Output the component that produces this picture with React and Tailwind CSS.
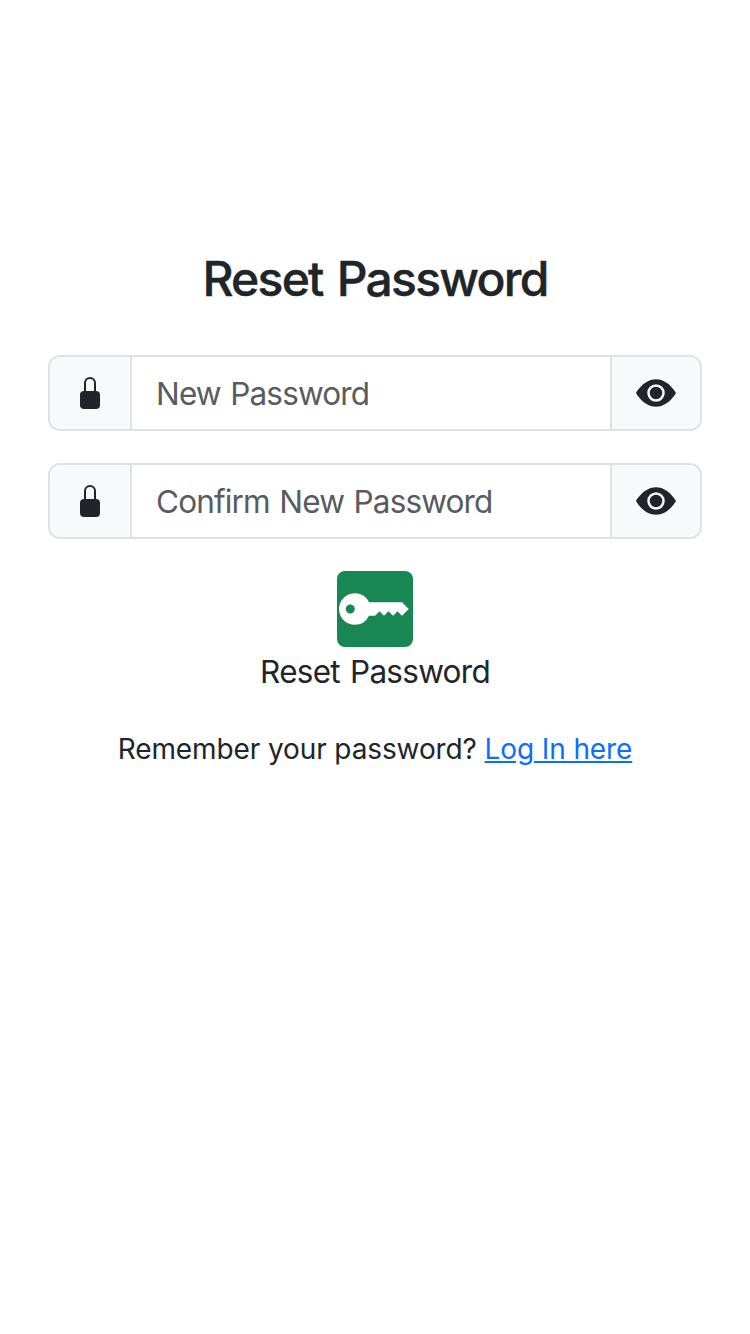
import { BsKeyFill, BsLockFill, BsEyeFill } from "react-icons/bs";

function PasswordField({ placeholder }) {
  return (
    <div className="flex h-[76px] w-full overflow-hidden rounded-xl border-2 border-[#dee2e6] text-[31.5px]">
      <span className="flex w-[82px] shrink-0 items-center justify-center border-r-2 border-[#dee2e6] bg-[#f8f9fa]">
        <BsLockFill className="size-8" />
      </span>
      <input
        type="password"
        placeholder={placeholder}
        className="min-w-0 flex-1 bg-white px-6 pt-0.5 tracking-[-0.85px] [word-spacing:1.5px] outline-none placeholder:text-[#585c60]"
      />
      <button type="button" className="flex w-[90px] shrink-0 items-center justify-center border-l-2 border-[#dee2e6] bg-[#f8f9fa]">
        <BsEyeFill className="size-10" />
      </button>
    </div>
  );
}

export default function App() {
  return (
    <main className="flex min-h-screen flex-col items-center bg-white px-12 pt-[250px] font-['Inter',sans-serif] text-[#212529]">
      <h1 className="text-[48px] leading-[58px] font-medium tracking-[-1.75px] [word-spacing:3px] whitespace-nowrap [-webkit-text-stroke:0.4px_currentColor]">Reset Password</h1>
      <form className="mt-[47px] flex w-full flex-col items-center gap-8">
        <PasswordField placeholder="New Password" />
        <PasswordField placeholder="Confirm New Password" />
        <div className="flex flex-col items-center">
          <button type="button" aria-label="Reset Password" className="flex size-[76px] items-center justify-center rounded-lg bg-[#198754] text-white">
            <BsKeyFill className="size-[72px]" />
          </button>
          <span className="pt-px text-[31.5px] leading-[48px] tracking-[-0.73px] [word-spacing:2px] whitespace-nowrap">Reset Password</span>
        </div>
      </form>
      <p className="mt-8 text-[28px] leading-[42px] tracking-[-0.11px] whitespace-nowrap">
        Remember your password? <a href="#login" className="text-[#0d6efd] underline">Log In here</a>
      </p>
    </main>
  );
}
